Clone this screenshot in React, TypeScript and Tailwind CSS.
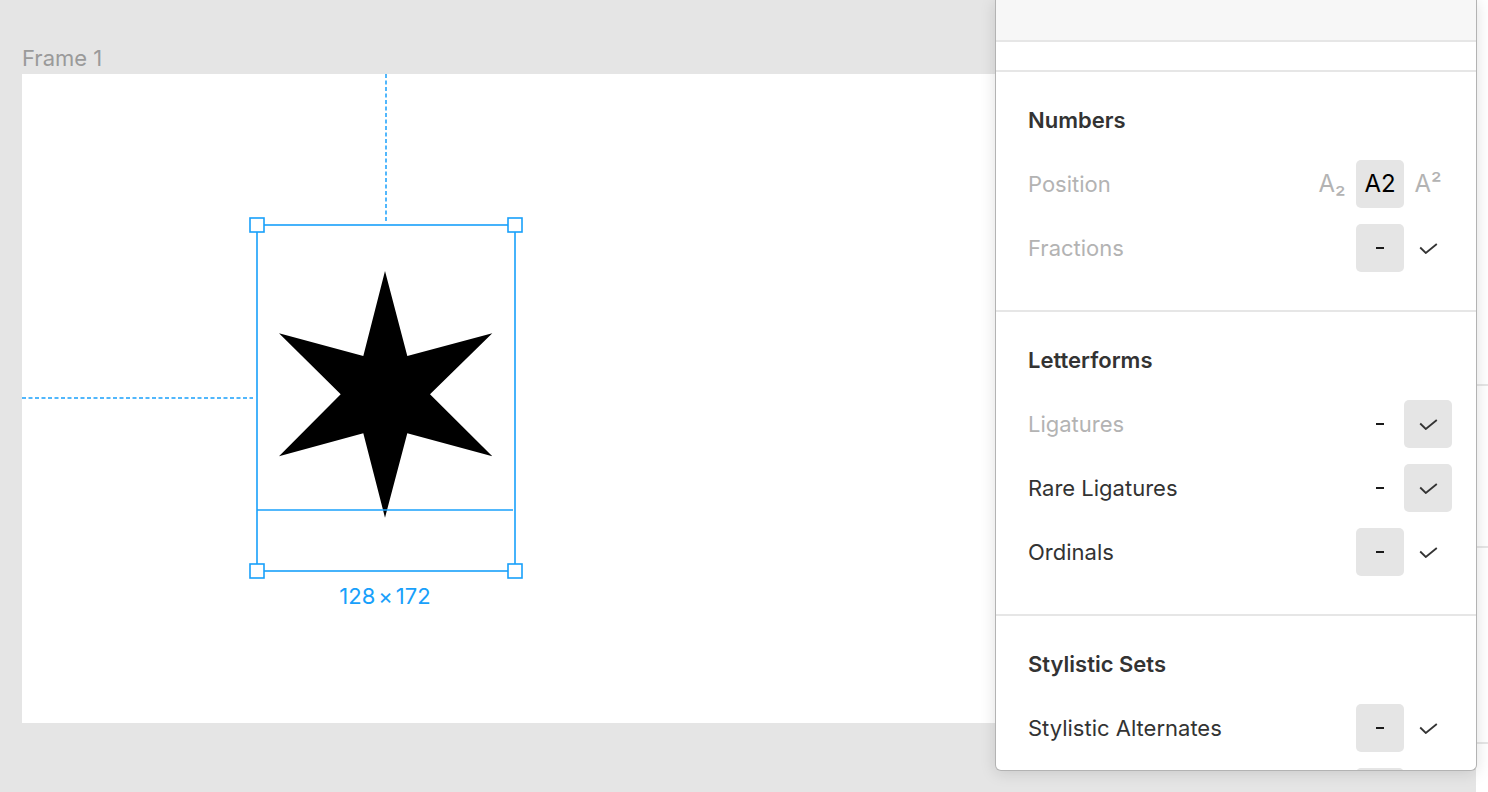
import React from "react";

const FONT = { fontFamily: "Inter, 'Noto Sans', sans-serif" };

function Check() {
  return (
    <svg width="19" height="11" viewBox="0 0 19 11" fill="none">
      <polyline points="1.2,4.5 6.8,10 17.8,1" stroke="#333333" strokeWidth="1.8" />
    </svg>
  );
}

function Dash() {
  return <span className="block w-[8px] h-[2px] bg-[#1a1a1a]" />;
}

function Cell({ active, children }: { active?: boolean; children?: React.ReactNode }) {
  return (
    <div className={`w-12 h-12 flex items-center justify-center rounded-[5px] ${active ? "bg-[#e5e5e5]" : ""}`}>
      {children}
    </div>
  );
}

function Row({ label, disabled, children }: { label: string; disabled?: boolean; children: React.ReactNode }) {
  return (
    <div className="h-16 flex items-center justify-between">
      <span className={`text-[22px] ${disabled ? "text-[#b3b3b3]" : "text-[#333333]"}`}>{label}</span>
      <div className="flex items-center">{children}</div>
    </div>
  );
}

function Section({ title, children, last }: { title: string; children: React.ReactNode; last?: boolean }) {
  return (
    <div className={`pl-8 pr-6 pt-6 pb-[30px] ${last ? "" : "border-b-2 border-[#e6e6e6]"}`}>
      <div className="h-12 flex items-center mb-2 text-[22px] font-semibold text-[#333333]">{title}</div>
      {children}
    </div>
  );
}

function StarDrawing() {
  const blue = "#18a0fb";
  const star =
    "363,197 385.3,282 470.3,259.3 408,320.3 470.3,382.3 385.3,359.3 363,443.7 341.3,359.3 257,382.3 318.7,320.3 257,259.3 341.3,282";
  const handles: [number, number][] = [
    [235, 151],
    [493, 151],
    [235, 497],
    [493, 497],
  ];
  return (
    <svg className="absolute left-0 top-0" width="600" height="600" viewBox="0 0 600 600">
      <line x1="364" y1="0" x2="364" y2="148" stroke={blue} strokeWidth="1.5" strokeDasharray="4 2.5" />
      <line x1="0" y1="324" x2="231" y2="324" stroke={blue} strokeWidth="1.5" strokeDasharray="4 2.5" />
      <polygon points={star} fill="#000" />
      <rect x="235" y="151" width="258" height="346" fill="none" stroke={blue} strokeWidth="1.6" />
      <line x1="235" y1="436" x2="491" y2="436" stroke={blue} strokeWidth="1.6" />
      {handles.map(([x, y], i) => (
        <rect key={i} x={x - 7} y={y - 7} width="14" height="14" fill="#fff" stroke={blue} strokeWidth="1.6" />
      ))}
    </svg>
  );
}

export default function App() {
  return (
    <div className="relative w-[1488px] h-[792px] overflow-hidden bg-[#e5e5e5] flex" style={FONT}>
      {/* canvas */}
      <div className="relative flex-1 overflow-hidden">
        <div className="absolute left-[22px] top-[44px]">
          <div className="h-[30px] leading-[28px] text-[22px] text-[#9a9a9a]">Frame 1</div>
          <div className="relative w-[1300px] h-[649px] bg-white">
            <StarDrawing />
            <div className="absolute left-[263px] w-[200px] top-[508px] h-[28px] flex items-center justify-center text-[22px] text-[#18a0fb]">
              128<span className="mx-[3px]">×</span>172
            </div>
          </div>
        </div>
      </div>

      {/* right sidebar (behind popover) */}
      <div className="w-[12px] h-full bg-white flex flex-col">
        <div className="h-[386px] border-b-2 border-[#e6e6e6]" />
        <div className="h-[162px] border-b-2 border-[#e6e6e6]" />
        <div className="h-[196px] border-b-2 border-[#e6e6e6]" />
      </div>

      {/* popover panel */}
      <div className="absolute left-[995px] top-0 w-[482px] h-[771px] bg-white border border-t-0 border-[#b3b3b3] rounded-b-[6px] overflow-hidden shadow-[0_2px_16px_rgba(0,0,0,0.13)]">
        <div className="h-[42px] bg-[#f7f7f7] border-b-2 border-[#e6e6e6]" />
        <div className="h-[30px] border-b-2 border-[#e6e6e6]" />
        <Section title="Numbers">
          <Row label="Position" disabled>
            <Cell>
              <span className="text-[24px] text-[#b3b3b3]">A₂</span>
            </Cell>
            <Cell active>
              <span className="text-[24px] text-black">A2</span>
            </Cell>
            <Cell>
              <span className="text-[24px] text-[#b3b3b3]">A²</span>
            </Cell>
          </Row>
          <Row label="Fractions" disabled>
            <Cell active>
              <Dash />
            </Cell>
            <Cell>
              <Check />
            </Cell>
          </Row>
        </Section>
        <Section title="Letterforms">
          <Row label="Ligatures" disabled>
            <Cell>
              <Dash />
            </Cell>
            <Cell active>
              <Check />
            </Cell>
          </Row>
          <Row label="Rare Ligatures">
            <Cell>
              <Dash />
            </Cell>
            <Cell active>
              <Check />
            </Cell>
          </Row>
          <Row label="Ordinals">
            <Cell active>
              <Dash />
            </Cell>
            <Cell>
              <Check />
            </Cell>
          </Row>
        </Section>
        <Section title="Stylistic Sets" last>
          <Row label="Stylistic Alternates">
            <Cell active>
              <Dash />
            </Cell>
            <Cell>
              <Check />
            </Cell>
          </Row>
          <Row label="">
            <Cell active />
            <Cell />
          </Row>
        </Section>
      </div>
    </div>
  );
}
